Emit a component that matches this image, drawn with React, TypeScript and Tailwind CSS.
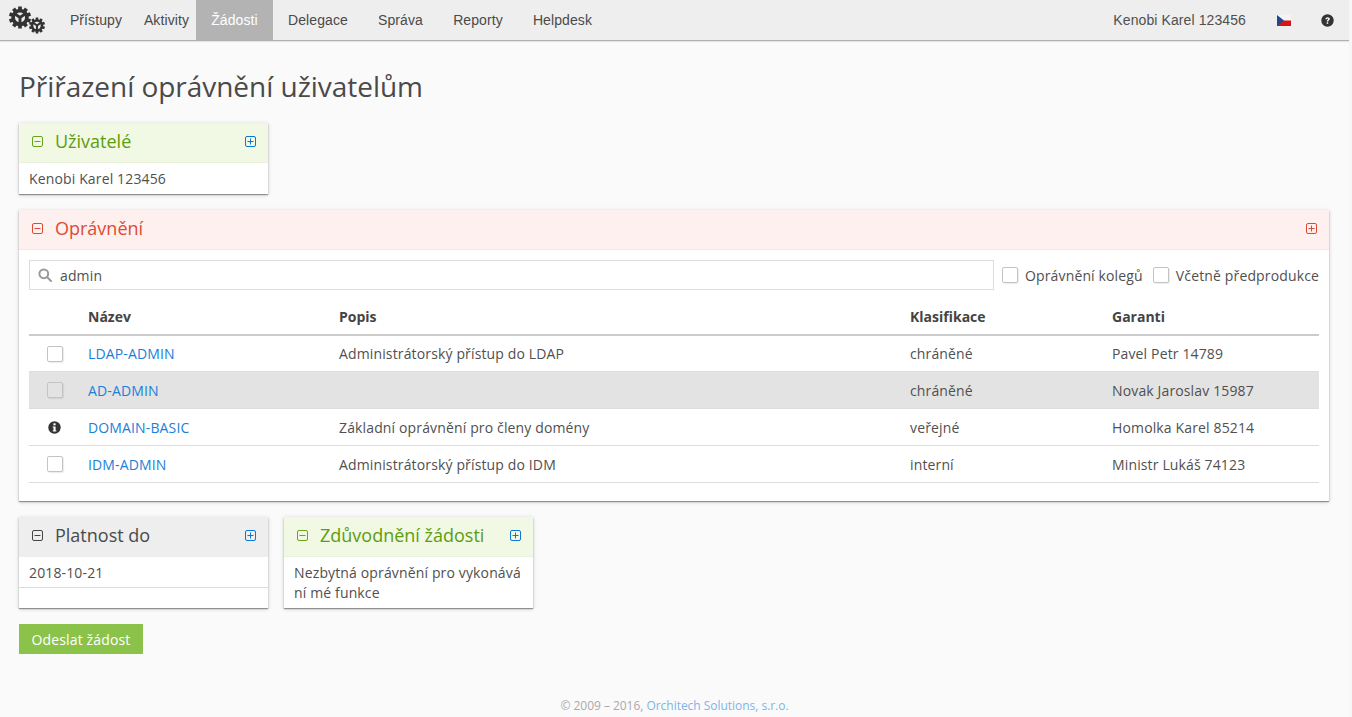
const navItems = [
  { label: "Přístupy", width: "w-[82px]" },
  { label: "Aktivity", width: "w-[59px]" },
  { label: "Žádosti", width: "w-[77px]" },
  { label: "Delegace", width: "w-[90px]" },
  { label: "Správa", width: "w-[75px]" },
  { label: "Reporty", width: "w-[80px]" },
  { label: "Helpdesk", width: "w-[89px]" },
];

const rows = [
  { name: "LDAP-ADMIN", desc: "Administrátorský přístup do LDAP", cls: "chráněné", owner: "Pavel Petr 14789", mark: "check" },
  { name: "AD-ADMIN", desc: "", cls: "chráněné", owner: "Novak Jaroslav 15987", mark: "disabled" },
  { name: "DOMAIN-BASIC", desc: "Základní oprávnění pro členy domény", cls: "veřejné", owner: "Homolka Karel 85214", mark: "info" },
  { name: "IDM-ADMIN", desc: "Administrátorský přístup do IDM", cls: "interní", owner: "Ministr Lukáš 74123", mark: "check" },
];

function Gear({ size, x, y }: { size: number; x: number; y: number }) {
  const teeth = Array.from({ length: 10 }, (_, i) => i * 36);
  return (
    <g transform={`translate(${x} ${y}) scale(${size / 24})`}>
      {teeth.map((a) => (
        <rect key={a} x="-2" y="-12" width="4" height="5" fill="#333" transform={`rotate(${a})`} />
      ))}
      <circle r="7.5" fill="none" stroke="#333" strokeWidth="4" />
      <path d="M0 0 L-5.5 -4 M0 0 L5.5 -4 M0 0 L0 7" stroke="#333" strokeWidth="3.2" />
    </g>
  );
}

function Logo() {
  return (
    <svg width="38" height="30" viewBox="0 0 38 30">
      <Gear size={22} x={12} y={12.5} />
      <Gear size={16} x={29} y={20.5} />
    </svg>
  );
}

function BoxIcon({ plus, color }: { plus?: boolean; color: string }) {
  return (
    <svg width="11" height="11" viewBox="0 0 11 11" fill="none" stroke={color} strokeWidth="1">
      <rect x="0.5" y="0.5" width="10" height="10" rx="1.5" />
      <path d="M2.5 5.5 H8.5" />
      {plus && <path d="M5.5 2.5 V8.5" />}
    </svg>
  );
}

function Checkbox({ disabled }: { disabled?: boolean }) {
  return (
    <span className={`block w-[16px] h-[16px] rounded-[2px] border border-[#c4c4c4] shadow-[1px_1px_1px_rgba(0,0,0,0.08)] ${disabled ? "bg-[#e3e3e3]" : "bg-white"}`} />
  );
}

function InfoIcon() {
  return (
    <svg width="13" height="13" viewBox="0 0 13 13">
      <circle cx="6.5" cy="6.5" r="6.2" fill="#333" />
      <rect x="5.4" y="2.3" width="2.2" height="2" fill="#fff" />
      <path d="M4.7 5.4 H7.6 V9.4 H8.4 V10.6 H4.7 V9.4 H5.5 V6.6 H4.7 Z" fill="#fff" />
    </svg>
  );
}

function HelpIcon() {
  return (
    <svg width="13" height="13" viewBox="0 0 13 13">
      <circle cx="6.5" cy="6.5" r="6.2" fill="#333" />
      <path d="M4.4 5.2 C4.5 3.9 5.4 3.2 6.6 3.2 C7.9 3.2 8.8 4 8.8 5 C8.8 6.4 7.2 6.4 7.2 7.6 H5.7 C5.7 5.9 7.2 5.9 7.2 5.1 C7.2 4.7 6.9 4.5 6.5 4.5 C6.1 4.5 5.9 4.8 5.8 5.3 Z" fill="#fff" />
      <rect x="5.7" y="8.3" width="1.5" height="1.5" fill="#fff" />
    </svg>
  );
}

function Flag() {
  return (
    <svg width="14" height="11" viewBox="0 0 14 11">
      <rect width="14" height="5.5" fill="#f4f4f4" />
      <rect y="5.5" width="14" height="5.5" fill="#d7141a" />
      <path d="M0 0 L7 5.5 L0 11 Z" fill="#1d4a8f" />
    </svg>
  );
}

function SearchIcon() {
  return (
    <svg width="14" height="14" viewBox="0 0 14 14" fill="none" stroke="#999" strokeWidth="2">
      <circle cx="5.8" cy="5.8" r="4.4" />
      <path d="M9 9 L13 13" strokeLinecap="round" />
    </svg>
  );
}

function Panel({ title, tone, className, children }: { title: string; tone: "green" | "red" | "gray"; className: string; children: React.ReactNode }) {
  const head = {
    green: "bg-[#f1f8e4] text-[#5d9d0f] border-[#e9f1dc]",
    red: "bg-[#fef0ee] text-[#dd4b35] border-[#f7e8e6]",
    gray: "bg-[#eeeeee] text-[#4a4a4a] border-[#eeeeee]",
  }[tone];
  const minus = { green: "#6aa51c", red: "#dd4b35", gray: "#444444" }[tone];
  return (
    <section className={`bg-white shadow-[0_1px_1px_rgba(0,0,0,0.35),0_1px_4px_rgba(0,0,0,0.2)] ${className}`}>
      <header className={`h-[40px] flex items-center pl-[13px] pr-[12px] pb-[2px] border-b ${head}`}>
        <BoxIcon color={minus} />
        <h2 className="ml-[12px] text-[18px] flex-1 font-normal tracking-normal">{title}</h2>
        <BoxIcon plus color={tone === "red" ? "#dd4b35" : "#0b78d8"} />
      </header>
      {children}
    </section>
  );
}

export default function App() {
  return (
    <div className="h-[717px] overflow-hidden bg-[#f7f7f7]">
      <div className="w-[1349px] h-full bg-[#fafafa] text-[14px] tracking-[0.14px] text-[#505050] font-['Open_Sans',sans-serif]">
        <nav className="h-[40px] bg-[#eeeeee] shadow-[0_1px_0_#b0b0b0,0_2px_1px_rgba(0,0,0,0.08)] flex font-['Liberation_Sans',sans-serif] text-[14px] tracking-[0.1px]">
          <div className="w-[55px] pl-[8px] pt-[5px] shrink-0">
            <Logo />
          </div>
          {navItems.map((item) => (
            <a
              key={item.label}
              className={`h-[40px] flex items-center justify-center ${item.width} ${item.label === "Žádosti" ? "bg-[#b3b3b3] text-white" : "text-[#4a4a4a]"}`}
            >
              {item.label}
            </a>
          ))}
          <div className="ml-auto flex items-center">
            <span>Kenobi Karel 123456</span>
            <span className="ml-[31px] flex"><Flag /></span>
            <span className="ml-[30px] mr-[15px] flex"><HelpIcon /></span>
          </div>
        </nav>

        <main className="px-[19px]">
          <h1 className="mt-[26px] text-[28px] leading-[40px] font-normal mb-[17px] tracking-[-0.03px] text-[#4a4a4a]">Přiřazení oprávnění uživatelům</h1>

          <Panel title="Uživatelé" tone="green" className="w-[249px]">
            <div className="px-[10px] h-[31px] flex items-center">Kenobi Karel 123456</div>
          </Panel>

          <Panel title="Oprávnění" tone="red" className="w-[1310px] mt-[16px] pb-[18px]">
            <div className="px-[10px] pt-[10px]">
              <div className="flex items-center">
                <div className="h-[30px] w-[965px] bg-white border border-[#dddddd] flex items-center pl-[8px] gap-[8px]">
                  <SearchIcon />
                  <span>admin</span>
                </div>
                <label className="ml-[8px] flex items-center gap-[7px]"><Checkbox />Oprávnění kolegů</label>
                <label className="ml-auto flex items-center gap-[7px]"><Checkbox />Včetně předprodukce</label>
              </div>
              <table className="w-full table-fixed border-separate border-spacing-0 mt-[8px]">
                <colgroup>
                  <col className="w-[51px]" />
                  <col className="w-[251px]" />
                  <col className="w-[571px]" />
                  <col className="w-[202px]" />
                  <col />
                </colgroup>
                <thead>
                  <tr className="text-left text-[#444444]">
                    <th className="h-[38px] border-b-2 border-[#cccccc]" />
                    <th className="h-[38px] border-b-2 border-[#cccccc] px-[8px] font-bold tracking-normal">Název</th>
                    <th className="h-[38px] border-b-2 border-[#cccccc] px-[8px] font-bold tracking-normal">Popis</th>
                    <th className="h-[38px] border-b-2 border-[#cccccc] px-[8px] font-bold tracking-normal">Klasifikace</th>
                    <th className="h-[38px] border-b-2 border-[#cccccc] px-[8px] font-bold tracking-normal">Garanti</th>
                  </tr>
                </thead>
                <tbody>
                  {rows.map((row, i) => (
                    <tr key={row.name} className={row.mark === "disabled" ? "bg-[#e3e3e3]" : ""}>
                      <td className={`border-b border-[#dddddd] ${i === 0 ? "h-[36px]" : "h-[37px]"}`}>
                        <div className="flex justify-center">
                          {row.mark === "info" ? <InfoIcon /> : <Checkbox disabled={row.mark === "disabled"} />}
                        </div>
                      </td>
                      <td className="border-b border-[#dddddd] px-[8px] text-[#1a80d8]">{row.name}</td>
                      <td className="border-b border-[#dddddd] px-[8px]">{row.desc}</td>
                      <td className="border-b border-[#dddddd] px-[8px]">{row.cls}</td>
                      <td className="border-b border-[#dddddd] px-[8px]">{row.owner}</td>
                    </tr>
                  ))}
                </tbody>
              </table>
            </div>
          </Panel>

          <div className="flex gap-[16px] mt-[16px] items-start">
            <Panel title="Platnost do" tone="gray" className="w-[249px]">
              <div className="px-[10px] h-[31px] flex items-center border-b border-[#dddddd]">2018-10-21</div>
              <div className="h-[20px]" />
            </Panel>
            <Panel title="Zdůvodnění žádosti" tone="green" className="w-[249px]">
              <div className="px-[10px] pt-[6px] pb-[5px] leading-[20px] break-all">Nezbytná oprávnění pro vykonává ní mé funkce</div>
            </Panel>
          </div>

          <button className="mt-[16px] h-[30px] w-[124px] bg-[#8bc34a] text-white text-[14px] block">Odeslat žádost</button>
        </main>

        <footer className="mt-[43px] text-center text-[12px] tracking-[-0.03px] text-[#aaaaaa]">
          © 2009 – 2016, <span className="text-[#7fb4e6]">Orchitech Solutions, s.r.o.</span>
        </footer>
      </div>
    </div>
  );
}
